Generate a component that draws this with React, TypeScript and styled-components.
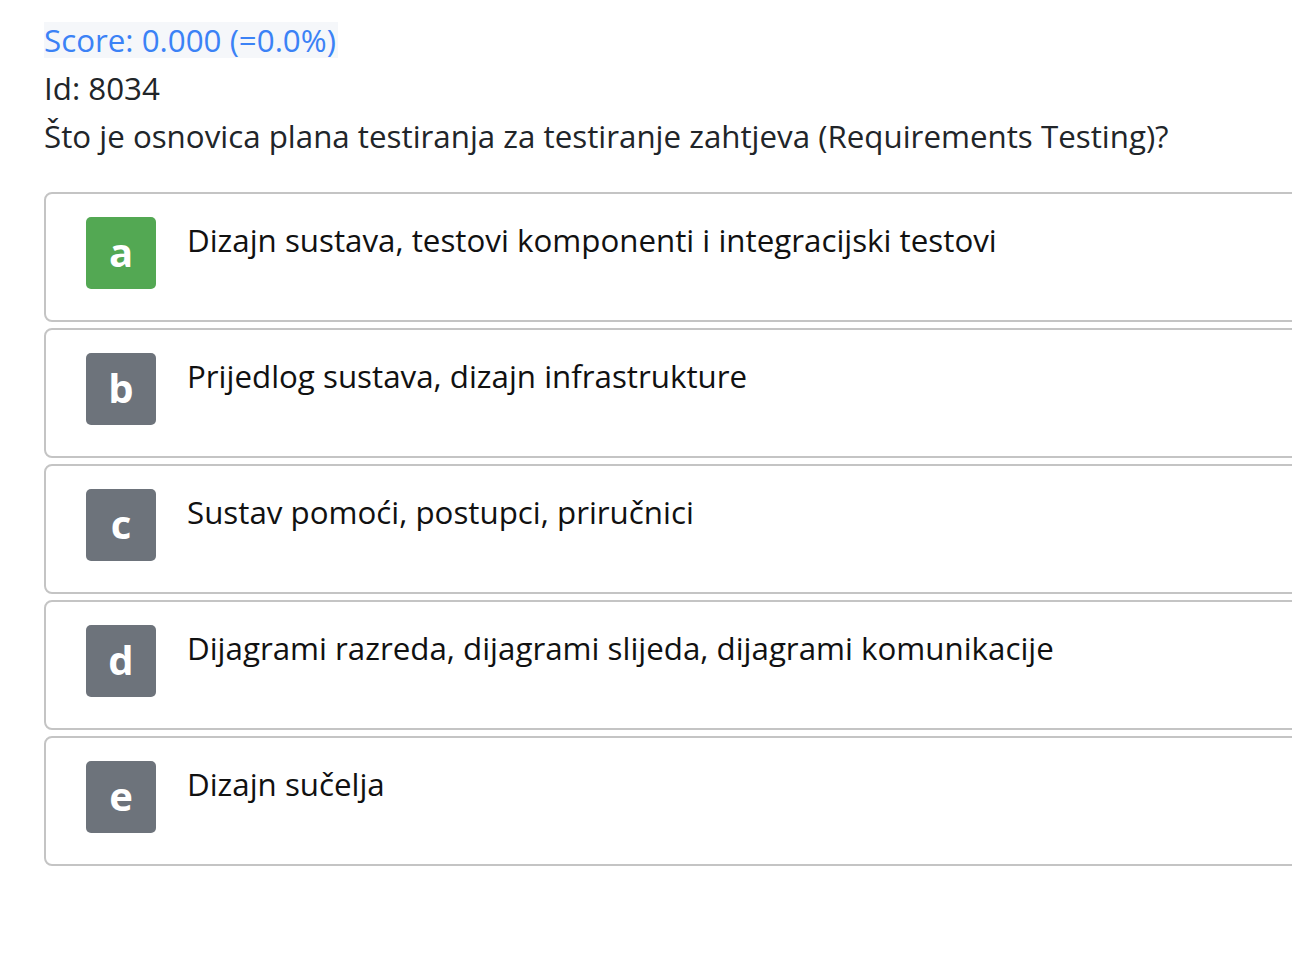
import React from "react";
import styled, { createGlobalStyle } from "styled-components";

const GlobalStyle = createGlobalStyle`
  html, body {
    margin: 0;
    padding: 0;
    background: #ffffff;
  }
  body {
    font-family: "Open Sans", "Noto Sans", sans-serif;
    color: #212529;
  }
`;

const Page = styled.div`
  padding: 16px 0 40px 44px;
  overflow: hidden;
`;

const Header = styled.div`
  font-size: 31.3px;
  line-height: 48px;
`;

const Score = styled.span`
  display: inline-block;
  background: #f5f7fa;
  color: #3b82f6;
  line-height: 36px;
  margin: 6px 0;
  padding-right: 2px;
`;

const Line = styled.div``;

const AnswerList = styled.div`
  display: flex;
  flex-direction: column;
  gap: 6px;
  margin-top: 32px;
`;

const Card = styled.div`
  width: calc(100% + 40px);
  box-sizing: border-box;
  border: 2px solid #c4c4c4;
  border-radius: 8px;
  padding: 23px 40px 31px;
  display: flex;
  align-items: flex-start;
  gap: 31px;
`;

const Badge = styled.div<{ $correct?: boolean }>`
  flex: 0 0 70px;
  height: 72px;
  border-radius: 5px;
  background: ${(p) => (p.$correct ? "#53a853" : "#6d737b")};
  color: #ffffff;
  font-size: 40px;
  font-weight: 700;
  display: flex;
  align-items: center;
  justify-content: center;
  padding-bottom: 4px;
  box-sizing: border-box;
`;

const AnswerText = styled.div`
  font-size: 31.3px;
  line-height: 40px;
  color: #111;
  padding-top: 3px;
`;

const answers = [
  { key: "a", text: "Dizajn sustava, testovi komponenti i integracijski testovi", correct: true },
  { key: "b", text: "Prijedlog sustava, dizajn infrastrukture" },
  { key: "c", text: "Sustav pomoći, postupci, priručnici" },
  { key: "d", text: "Dijagrami razreda, dijagrami slijeda, dijagrami komunikacije" },
  { key: "e", text: "Dizajn sučelja" },
];

const App: React.FC = () => {
  return (
    <>
      <GlobalStyle />
      <Page>
        <Header>
          <Score>Score: 0.000 (=0.0%)</Score>
          <Line>Id: 8034</Line>
          <Line>Što je osnovica plana testiranja za testiranje zahtjeva (Requirements Testing)?</Line>
        </Header>
        <AnswerList>
          {answers.map((a) => (
            <Card key={a.key}>
              <Badge $correct={a.correct}>{a.key}</Badge>
              <AnswerText>{a.text}</AnswerText>
            </Card>
          ))}
        </AnswerList>
      </Page>
    </>
  );
};

export default App;
